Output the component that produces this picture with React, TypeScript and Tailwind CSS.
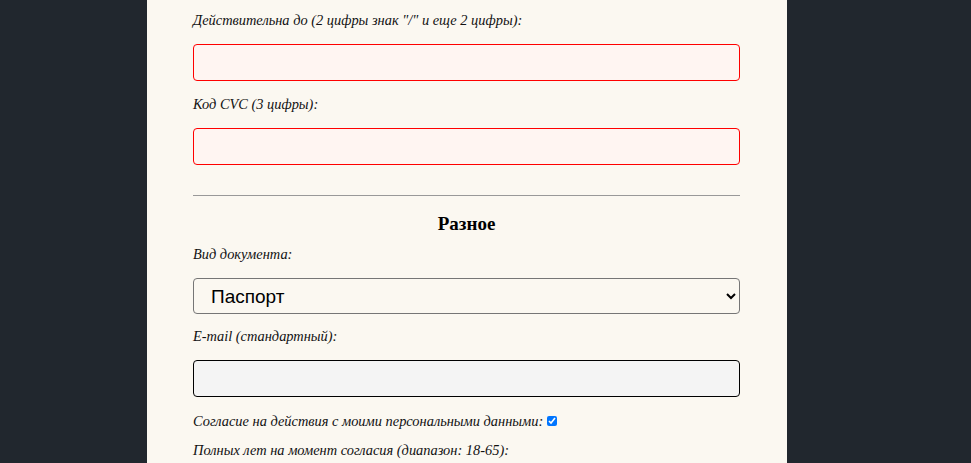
import React from 'react';

const serif = { fontFamily: '"Liberation Serif", "Times New Roman", serif' };

const Label: React.FC<{ children: React.ReactNode }> = ({ children }) => (
    <label className="block h-[20px] leading-[20px] text-[14.4px] italic text-[#111] mb-[14px]" style={serif}>
        {children}
    </label>
);

const App: React.FC = () => {
    return (
        <div className="w-full h-[463px] bg-[#21272e] flex overflow-hidden">
            <div className="ml-[147px] w-[640px] h-full bg-[#fbf8f1] pl-[46px] pr-[47px] pt-[10px]" style={serif}>
                <Label>Действительна до (2 цифры знак "/" и еще 2 цифры):</Label>
                <input
                    type="text"
                    className="block w-full h-[37px] border border-[#ff0000] rounded-[4px] bg-[#fff5f2] mb-[13px]"
                />
                <Label>Код CVC (3 цифры):</Label>
                <input
                    type="text"
                    className="block w-full h-[37px] border border-[#ff0000] rounded-[4px] bg-[#fff5f2]"
                />
                <hr className="mt-[30px] border-0 border-t border-[#999]" />
                <h3 className="mt-[17px] h-[22px] leading-[22px] text-center text-[19px] font-bold text-black">Разное</h3>
                <div className="mt-[9px]">
                    <Label>Вид документа:</Label>
                </div>
                <select
                    defaultValue="passport"
                    className="block w-full h-[36px] border border-[#767676] rounded-[4px] bg-[#fbf8f1] pl-[13px] pr-[4px] text-[19px] text-black mb-[12px]"
                    style={{ fontFamily: '"Liberation Sans", Arial, sans-serif' }}
                >
                    <option value="passport">Паспорт</option>
                </select>
                <Label>E-mail (стандартный):</Label>
                <input
                    type="email"
                    className="block w-full h-[37px] border border-black rounded-[4px] bg-[#f4f4f4] mb-[14px]"
                />
                <div className="h-[20px] leading-[20px] text-[14.4px] italic text-[#111] flex items-center mb-[9px]">
                    <span>Согласие на действия с моими персональными данными:</span>
                    <input type="checkbox" defaultChecked className="ml-[4px] w-[10px] h-[10px]" />
                </div>
                <div className="h-[20px] leading-[20px] text-[14.4px] italic text-[#111]">
                    Полных лет на момент согласия (диапазон: 18-65):
                </div>
            </div>
        </div>
    );
};

export default App;
